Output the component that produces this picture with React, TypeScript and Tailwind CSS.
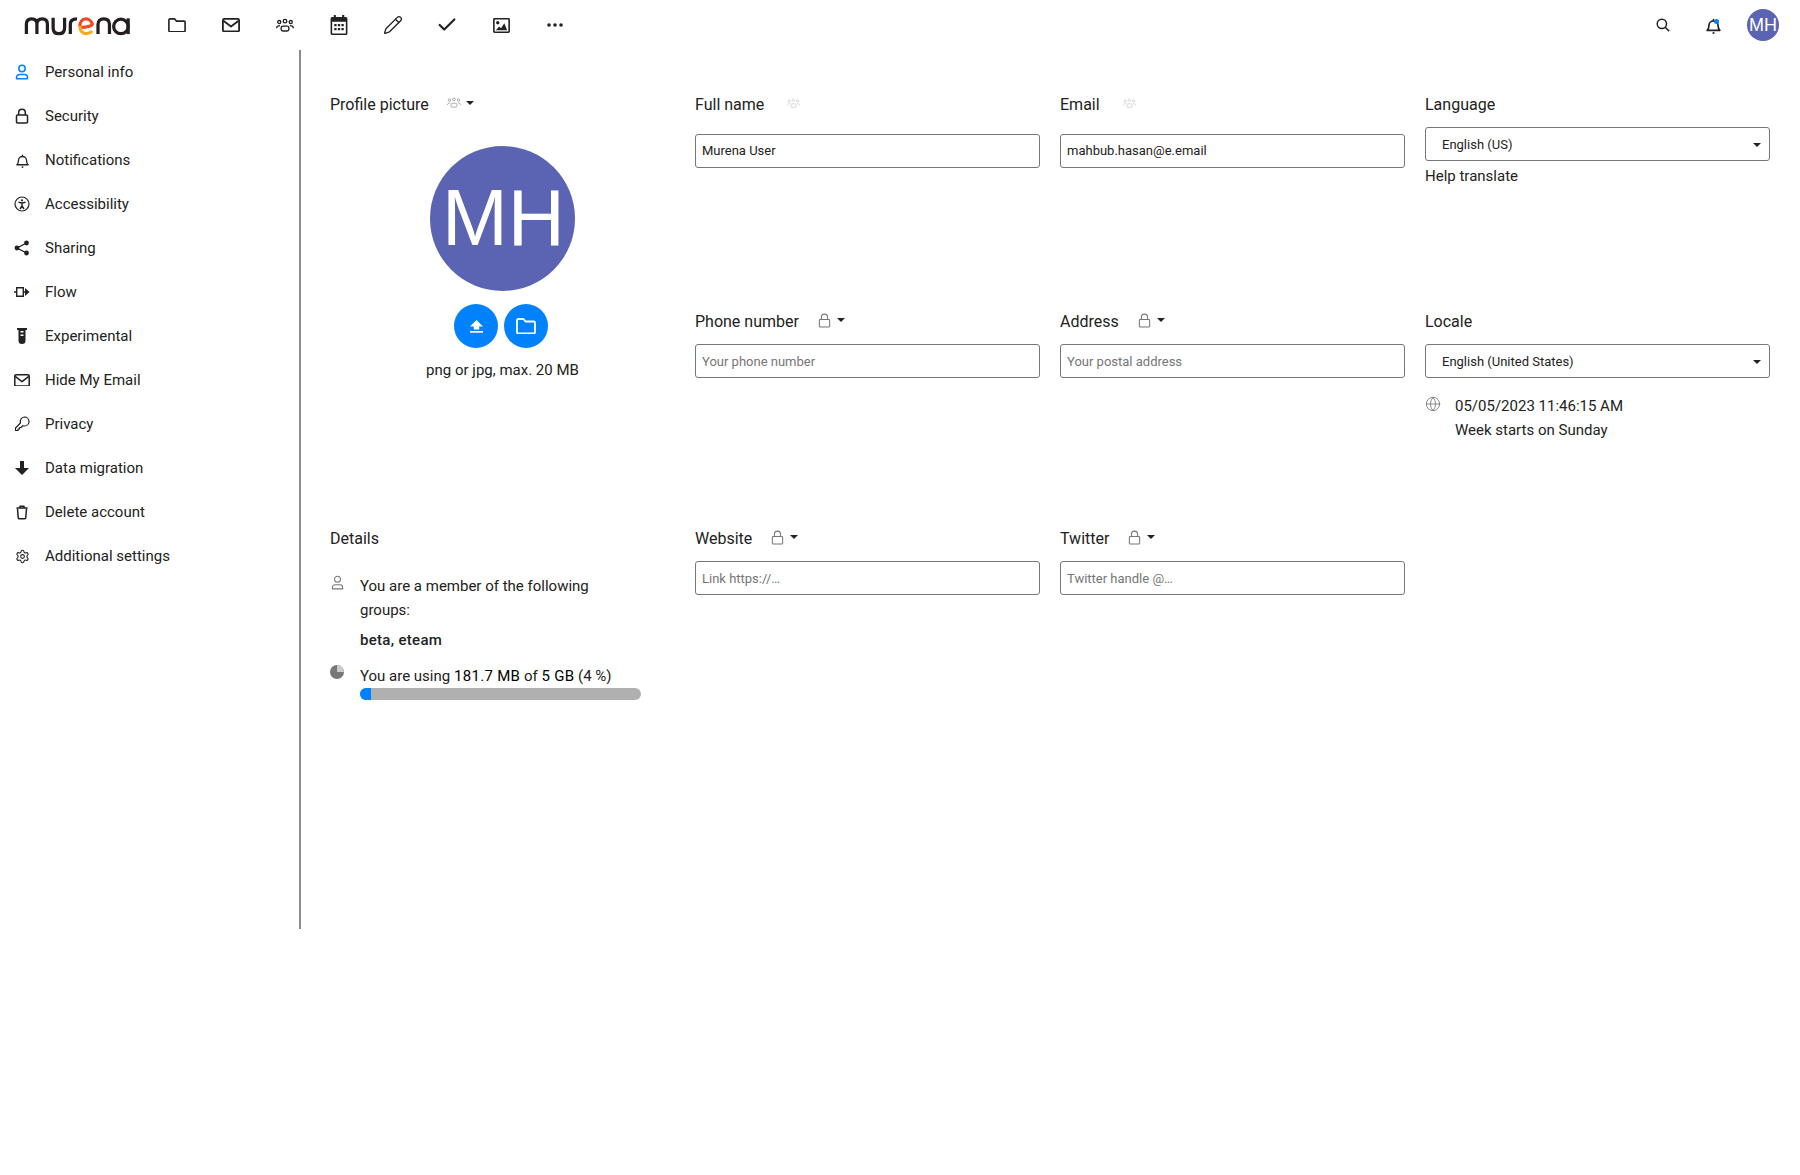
import { Pencil, Check, Settings, Globe } from "lucide-react";

const Logo = () => (
  <svg width="108" height="21" viewBox="0 0 110 22" fill="none" strokeWidth="3.4" strokeLinecap="butt">
    <path d="M2 20V9.5C2 6 4 4 7.5 4S13 6 13 9.5V20M13 9.5C13 6 15 4 18.5 4S24 6 24 9.5V20" stroke="#231f20" />
    <path d="M30 3V13.5C30 17.5 32.5 19.5 36 19.5S42 17.5 42 13.5V3" stroke="#231f20" />
    <path d="M48 20V9.5C48 6 50 4 55 4" stroke="#231f20" />
    <path d="M59 12.5C62 13.5 70 12 71 9.5C70 6 67 4 64.5 4C60.5 4 58 7.5 58 11.5" stroke="#ee4a23" />
    <path d="M58 11.5C58 16.5 61 19.5 65 19.5C67.5 19.5 69.5 18.5 71 17" stroke="#fbaa1a" />
    <path d="M77 20V10C77 6 79.5 4 83 4S89 6 89 10V20" stroke="#231f20" />
    <circle cx="101" cy="12" r="7.6" stroke="#231f20" />
    <path d="M108.6 3.5V20" stroke="#231f20" />
  </svg>
);

const FolderIcon = ({ color = "#222", width = 18 }: { color?: string; width?: number }) => (
  <svg width={width} height={width * 0.82} viewBox="0 0 20 16.400" fill="none" stroke={color} strokeWidth="1.800" strokeLinejoin="round">
    <path d="M1 2.200A1.200 1.200 0 0 1 2.200 1h5.300l2 2.500h8.300A1.200 1.200 0 0 1 19 4.700v9.500a1.200 1.200 0 0 1-1.200 1.200H2.200A1.200 1.200 0 0 1 1 14.200z" />
  </svg>
);

const MailIcon = ({ width = 18, stroke = 2 }: { width?: number; stroke?: number }) => (
  <svg width={width} height={width * 0.8} viewBox="0 0 20 16" fill="none" stroke="#222" strokeWidth={stroke} strokeLinejoin="round">
    <rect x="1" y="1" width="18" height="14" rx="1.500" />
    <path d="M1.500 3L10 9.500 18.500 3" />
  </svg>
);

const GroupIcon = ({ color = "#222", width = 20, stroke = 1.300 }: { color?: string; width?: number; stroke?: number }) => (
  <svg width={width} height={width * 0.8} viewBox="0 0 20 16" fill="none" stroke={color} strokeWidth={stroke}>
    <circle cx="10" cy="3.500" r="2" />
    <circle cx="3.600" cy="4.500" r="1.700" />
    <circle cx="16.400" cy="4.500" r="1.700" />
    <rect x="5.700" y="9" width="8.600" height="5.500" rx="2" />
    <path d="M.7 11.500C.7 9.300 2 8.500 4.500 8.500M19.300 11.500C19.300 9.300 18 8.500 15.500 8.500" />
  </svg>
);

const LockIcon = ({ color = "#222", stroke = 1.500, size = 16 }: { color?: string; stroke?: number; size?: number }) => (
  <svg width={size} height={size} viewBox="0 0 16 16" fill="none" stroke={color} strokeWidth={stroke}>
    <rect x="2.500" y="7" width="11" height="8" rx="1" />
    <path d="M4.700 7V4.500a3.300 3.300 0 0 1 6.600 0V7" />
  </svg>
);

const BellIcon = ({ size = 16, stroke = 1.500 }: { size?: number; stroke?: number }) => (
  <svg width={size} height={size} viewBox="0 0 16 16" fill="none" stroke="#222" strokeWidth={stroke} strokeLinejoin="round">
    <path d="M2 12.500c1.200-1 1.700-2.200 1.700-4.500a4.300 4.300 0 0 1 8.600 0c0 2.300.5 3.500 1.700 4.500z" />
    <circle cx="8" cy="15" r="1" fill="#222" stroke="none" />
    <circle cx="8" cy="2.400" r=".8" fill="#222" stroke="none" />
  </svg>
);

const PersonIcon = ({ color = "#222", stroke = 1.500, size = 16 }: { color?: string; stroke?: number; size?: number }) => (
  <svg width={size} height={size} viewBox="0 0 16 16" fill="none" stroke={color} strokeWidth={stroke} strokeLinejoin="round">
    <circle cx="8" cy="4.500" r="3.200" />
    <path d="M2.500 14.800v-1.300a3 3 0 0 1 3-3h5a3 3 0 0 1 3 3v1.300z" />
  </svg>
);

const SearchIcon = () => (
  <svg width="14" height="14" viewBox="0 0 16 16" fill="none" stroke="#222" strokeWidth="1.700">
    <circle cx="6.700" cy="6.700" r="5.300" />
    <path d="M10.500 10.500L15 15" />
  </svg>
);

const TrashIcon = () => (
  <svg width="16" height="16" viewBox="0 0 16 16" fill="none" stroke="#222" strokeWidth="1.500" strokeLinejoin="round">
    <path d="M3.500 4.500l.7 9a1.200 1.200 0 0 0 1.200 1.200h5.200a1.200 1.200 0 0 0 1.200-1.200l.7-9" />
    <path d="M2.500 4h11M6 4V2.200h4V4" />
  </svg>
);

const UploadIcon = () => (
  <svg width="13" height="13" viewBox="0 0 13 13" fill="#fff">
    <path d="M6.500 0L13 6.500H9.200V9.500H3.800V6.500H0z" />
    <rect y="11" width="13" height="1.700" />
  </svg>
);

const CalendarIcon = () => (
  <svg width="18" height="20" viewBox="2 0 16 19" fill="#222">
    <path d="M5 0h2v2h6V0h2v2h1.500A1.500 1.500 0 0 1 18 3.500v14a1.500 1.500 0 0 1-1.500 1.500h-13A1.500 1.500 0 0 1 2 17.500v-14A1.500 1.500 0 0 1 3.500 2H5zM3.500 6.500v11h13v-11z" />
    <path d="M5.500 8.500h2.200v2.200H5.500zM8.900 8.500h2.200v2.200H8.900zM12.300 8.500h2.200v2.200h-2.200zM5.500 12.300h2.200v2.200H5.500zM8.900 12.300h2.200v2.200H8.900zM12.300 12.300h2.200v2.200h-2.200z" />
  </svg>
);

const ImageIcon = () => (
  <svg width="17" height="15" viewBox="0 0 18 16" fill="#222">
    <path d="M1.500 0h15A1.500 1.500 0 0 1 18 1.500v13a1.500 1.500 0 0 1-1.500 1.500h-15A1.500 1.500 0 0 1 0 14.500v-13A1.500 1.500 0 0 1 1.500 0zM1.700 1.700v12.600h14.600V1.700z" />
    <circle cx="5" cy="5" r="1.800" />
    <path d="M3 13l3.500-4 2 2 3.500-5.500 3 7.500z" />
  </svg>
);

const DotsIcon = () => (
  <svg width="16" height="4" viewBox="0 0 16 4" fill="#222">
    <circle cx="2" cy="2" r="1.800" />
    <circle cx="8" cy="2" r="1.800" />
    <circle cx="14" cy="2" r="1.800" />
  </svg>
);

const AccessIcon = () => (
  <svg width="16" height="16" viewBox="0 0 16 16" fill="none" stroke="#222" strokeWidth="1.200">
    <circle cx="8" cy="8" r="7" />
    <circle cx="8" cy="4.300" r="1.100" fill="#222" stroke="none" />
    <path d="M4.500 6.300L8 7l3.500-.7M8 7v3M8 10l-2 3M8 10l2 3" strokeWidth="1.400" />
  </svg>
);

const ShareIcon = () => (
  <svg width="16" height="16" viewBox="0 0 16 16" fill="#222" stroke="#222">
    <circle cx="12.500" cy="3" r="2.400" stroke="none" />
    <circle cx="3" cy="8" r="2.400" stroke="none" />
    <circle cx="12.500" cy="13" r="2.400" stroke="none" />
    <path d="M12.500 3L3 8l9.500 5" fill="none" strokeWidth="1.400" />
  </svg>
);

const FlowIcon = () => (
  <svg width="16" height="12" viewBox="0 0 16 12" fill="none" stroke="#222" strokeWidth="1.400">
    <path d="M0 6h2M2.700 1.700h6.600v8.600H2.700z" />
    <path d="M9 6h3" />
    <path d="M11 2l4.500 4-4.500 4z" fill="#222" stroke="none" />
  </svg>
);

const TubeIcon = () => (
  <svg width="10" height="16" viewBox="0 0 10 16" fill="#222">
    <path d="M0 0h10v2H8.500v10.500a3.500 3.500 0 0 1-7 0V2H0z" />
    <path d="M3.500 3H6.500V4.500H3.500zM3.500 6.500H6.500V8H3.500z" fill="#fff" />
  </svg>
);

const KeyIcon = () => (
  <svg width="16" height="16" viewBox="0 0 16 16" fill="none" stroke="#222" strokeWidth="1.200" strokeLinejoin="round">
    <path d="M10.500 1a4.500 4.500 0 0 1 0 9c-.6 0-1.100-.1-1.600-.3L7 11.500H5.500V13H4v1.500H1.500V12l5-5A4.500 4.500 0 0 1 10.500 1z" />
  </svg>
);

const ArrowIcon = () => (
  <svg width="14" height="14" viewBox="0 0 14 14" fill="#222">
    <path d="M5 0h4v7h5l-7 7-7-7h5z" />
  </svg>
);

const Caret = () => <span className="ml-[5px] w-0 h-0 border-x-[4px] border-x-transparent border-t-[4px] border-t-[#222]" />;

const navIcons = [
  <FolderIcon />,
  <MailIcon />,
  <GroupIcon width={18} stroke={1.500} />,
  <CalendarIcon />,
  <Pencil size={20} strokeWidth={1.600} color="#222" />,
  <Check size={22} strokeWidth={2.400} color="#222" />,
  <ImageIcon />,
  <DotsIcon />,
];

const menu = [
  { label: "Personal info", icon: <PersonIcon color="#0082ff" /> },
  { label: "Security", icon: <LockIcon /> },
  { label: "Notifications", icon: <BellIcon size={15} stroke={1.400} /> },
  { label: "Accessibility", icon: <AccessIcon /> },
  { label: "Sharing", icon: <ShareIcon /> },
  { label: "Flow", icon: <FlowIcon /> },
  { label: "Experimental", icon: <TubeIcon /> },
  { label: "Hide My Email", icon: <MailIcon width={16} stroke={1.900} /> },
  { label: "Privacy", icon: <KeyIcon /> },
  { label: "Data migration", icon: <ArrowIcon /> },
  { label: "Delete account", icon: <TrashIcon /> },
  { label: "Additional settings", icon: <Settings size={15} strokeWidth={1.700} color="#222" /> },
];

const Title = ({ label, kind, caret = true, gap = "ml-[18px]" }: { label: string; kind: "group" | "lock" | "faint"; caret?: boolean; gap?: string }) => (
  <div className="h-[24px] flex items-center text-[16px] text-[#222]">
    <span>{label}</span>
    <span className={`${gap} flex items-center -mt-[4px]`}>
      {kind === "lock" && <LockIcon color="#777" stroke={1.100} size={15} />}
      {kind === "group" && <GroupIcon color="#888" width={14} stroke={1} />}
      {kind === "faint" && <GroupIcon color="#c4c4c4" width={13} stroke={1} />}
      {caret && <Caret />}
    </span>
  </div>
);

const Field = ({ value, placeholder }: { value?: string; placeholder?: string }) => (
  <div className={`h-[34px] border border-[#777] rounded-[3px] px-[6px] flex items-center text-[13px] ${value ? "text-[#222]" : "pt-[2px] text-[#767676]"}`}>
    {value || placeholder}
  </div>
);

const Picker = ({ value }: { value: string }) => (
  <div className="h-[34px] border border-[#777] rounded-[3px] pt-[2px] pl-[16px] pr-[8px] flex items-center justify-between text-[13px] text-[#222]">
    <span>{value}</span>
    <span className="w-0 h-0 border-x-[4px] border-x-transparent border-t-[4px] border-t-[#222]" />
  </div>
);

export default function App() {
  return (
    <div className="w-[1800px] h-[1175px] bg-white font-['Roboto',sans-serif] text-[#222] overflow-hidden">
      <header className="h-[50px] flex items-center">
        <div className="w-[150px] pl-[23px] flex items-center">
          <Logo />
        </div>
        {navIcons.map((icon, i) => (
          <div key={i} className="w-[54px] h-[50px] flex items-center justify-center">
            {icon}
          </div>
        ))}
        <div className="ml-auto flex items-center pr-[12px]">
          <div className="w-[50px] h-[50px] flex items-center justify-center">
            <SearchIcon />
          </div>
          <div className="w-[50px] h-[50px] flex items-center justify-center relative">
            <BellIcon size={17} stroke={1.600} />
            <span className="absolute top-[19px] left-[26px] w-[5px] h-[5px] rounded-full bg-[#0082ff]" />
          </div>
          <div className="w-[50px] flex justify-center">
            <div className="w-[32px] h-[32px] rounded-full bg-[#5b64b3] text-white font-['Liberation_Sans',sans-serif] text-[18px] flex items-center justify-center">MH</div>
          </div>
        </div>
      </header>

      <div className="flex">
        <aside className="w-[301px] h-[879px] border-r-2 border-[#8c8c8c] shrink-0">
          {menu.map((item) => (
            <div key={item.label} className="h-[44px] flex items-center text-[15px]">
              <span className="w-[45px] pr-[1px] flex justify-center">{item.icon}</span>
              <span>{item.label}</span>
            </div>
          ))}
        </aside>

        <main className="pl-[29px] pt-[43px]">
          <div className="grid grid-cols-[345px_345px_345px_345px] gap-x-[20px] auto-rows-[217px]">
            <section className="row-span-2">
              <Title label="Profile picture" kind="group" />
              <div className="flex flex-col items-center mt-[29px]">
                <div className="w-[145px] h-[145px] rounded-full bg-[#5b64b3] text-white font-['Liberation_Sans',sans-serif] text-[79px] pl-[2px] flex items-center justify-center">MH</div>
                <div className="flex gap-[6px] mt-[13px] -ml-[3px]">
                  <div className="w-[44px] h-[44px] rounded-full bg-[#0082ff] flex items-center justify-center">
                    <UploadIcon />
                  </div>
                  <div className="w-[44px] h-[44px] rounded-full bg-[#0082ff] flex items-center justify-center">
                    <FolderIcon color="#fff" width={20} />
                  </div>
                </div>
                <p className="text-[15px] mt-[11px] leading-[22px]">png or jpg, max. 20 MB</p>
              </div>
            </section>
            <section>
              <Title label="Full name" kind="faint" caret={false} gap="ml-[23px]" />
              <div className="mt-[17px]"><Field value="Murena User" /></div>
            </section>
            <section>
              <Title label="Email" kind="faint" caret={false} gap="ml-[23px]" />
              <div className="mt-[17px]"><Field value="mahbub.hasan@e.email" /></div>
            </section>
            <section>
              <div className="h-[24px] flex items-center text-[16px]">Language</div>
              <div className="mt-[10px]"><Picker value="English (US)" /></div>
              <p className="text-[15px] mt-[4px] leading-[22px]">Help translate</p>
            </section>

            <section>
              <Title label="Phone number" kind="lock" />
              <div className="mt-[10px]"><Field placeholder="Your phone number" /></div>
            </section>
            <section>
              <Title label="Address" kind="lock" />
              <div className="mt-[10px]"><Field placeholder="Your postal address" /></div>
            </section>
            <section>
              <div className="h-[24px] flex items-center text-[16px]">Locale</div>
              <div className="mt-[10px]"><Picker value="English (United States)" /></div>
              <div className="flex mt-[16px] text-[15px] leading-[24px]">
                <span className="w-[30px] pt-[2px]"><Globe size={16} strokeWidth={1.300} color="#777" /></span>
                <div>
                  <div>05/05/2023 11:46:15 AM</div>
                  <div>Week starts on Sunday</div>
                </div>
              </div>
            </section>

            <section>
              <div className="h-[24px] flex items-center text-[16px]">Details</div>
              <div className="flex mt-[23px] text-[15px] leading-[24px]">
                <span className="w-[30px] pt-[1px]"><PersonIcon color="#777" stroke={1.100} size={15} /></span>
                <div className="w-[281px]">
                  <p>You are a member of the following groups:</p>
                  <p className="font-medium tracking-[0.3px] mt-[6px]">beta, eteam</p>
                </div>
              </div>
              <div className="flex mt-[12px] text-[15px] leading-[24px]">
                <span className="w-[30px] pt-[1px]">
                  <svg width="14" height="14" viewBox="0 0 14 14"><circle cx="7" cy="7" r="7" fill="#777" /><path d="M7 7V0a7 7 0 0 1 7 7z" fill="#ccc" /></svg>
                </span>
                <div className="w-[281px]">
                  <p>You are using <span className="tracking-[0.3px] text-black">181.7 MB</span> of <span className="tracking-[0.3px] text-black">5 GB</span> (4 %)</p>
                  <div className="h-[12px] rounded-full bg-[#b0b0b0] overflow-hidden">
                    <div className="h-full w-[11px] bg-[#0082ff]" />
                  </div>
                </div>
              </div>
            </section>
            <section>
              <Title label="Website" kind="lock" />
              <div className="mt-[10px]"><Field placeholder="Link https://…" /></div>
            </section>
            <section>
              <Title label="Twitter" kind="lock" />
              <div className="mt-[10px]"><Field placeholder="Twitter handle @…" /></div>
            </section>
          </div>
        </main>
      </div>
    </div>
  );
}
